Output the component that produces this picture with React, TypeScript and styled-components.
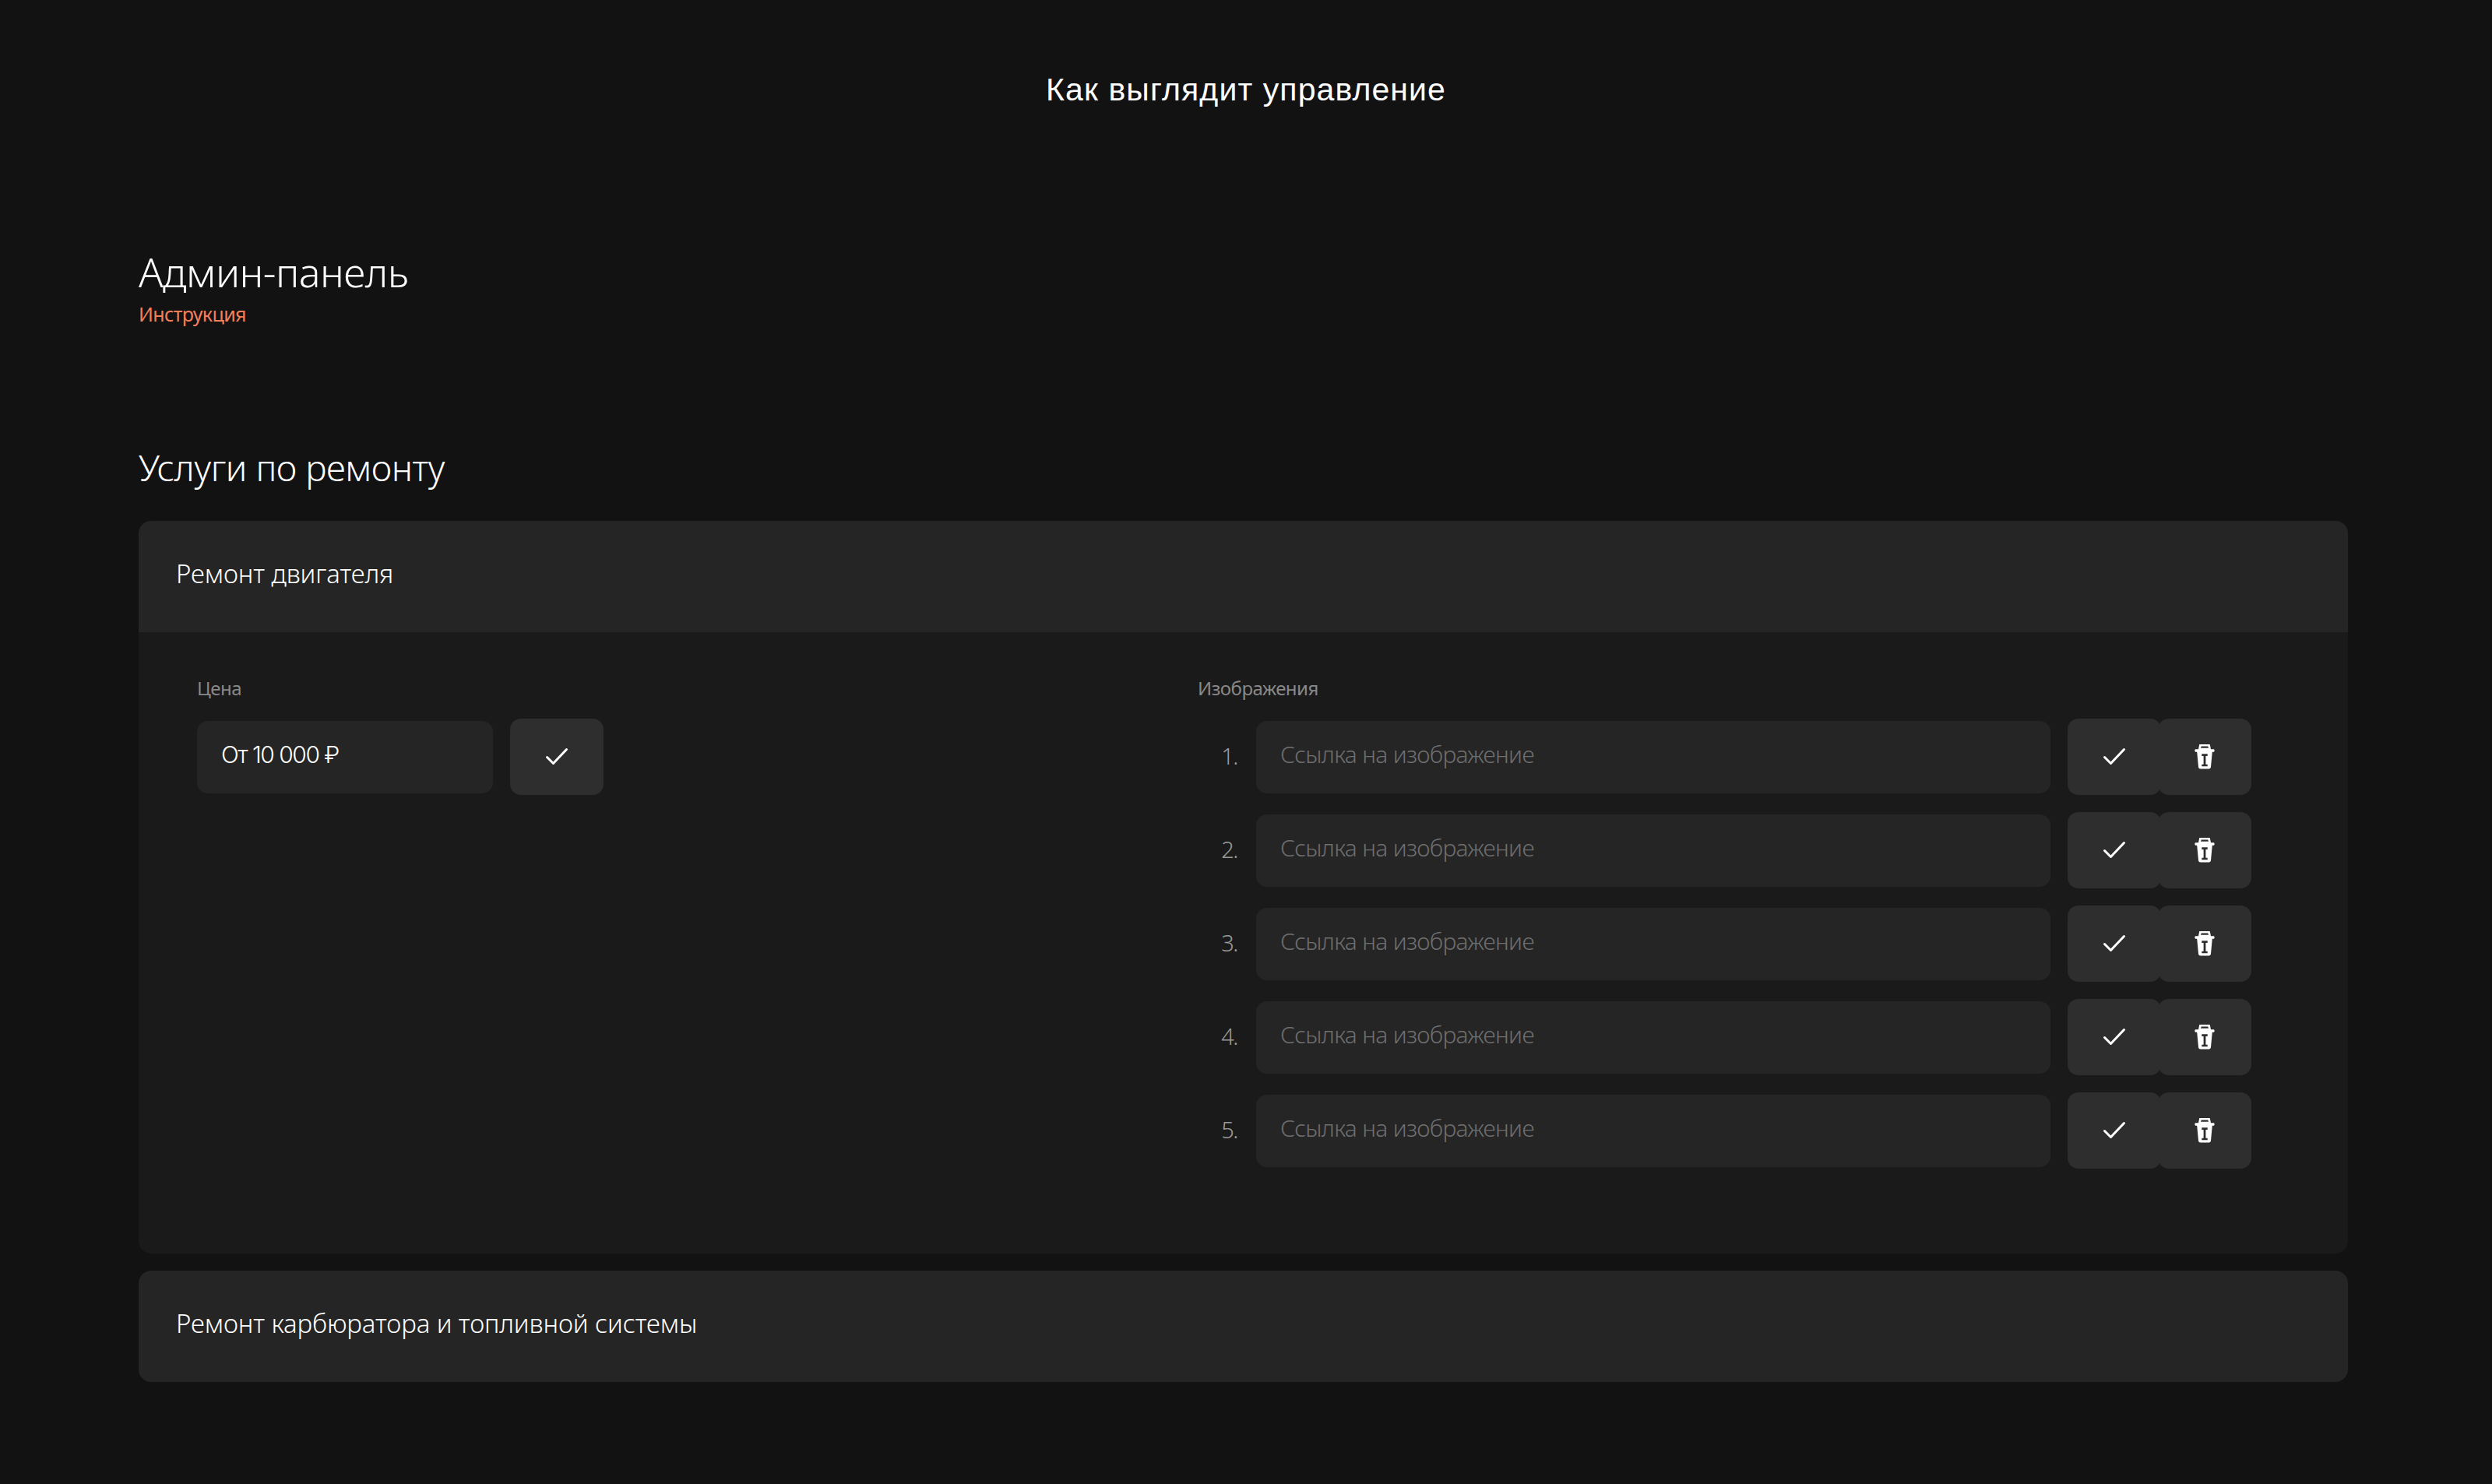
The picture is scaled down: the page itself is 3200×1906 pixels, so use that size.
import styled, { createGlobalStyle } from 'styled-components';

const Global = createGlobalStyle`
  html, body {
    margin: 0;
    padding: 0;
    background: #121212;
  }
  * {
    box-sizing: border-box;
  }
`;

const Page = styled.div`
  width: 3200px;
  height: 1906px;
  padding: 0 185px 0 178px;
  background: #121212;
  color: #fff;
  font-family: 'Noto Sans', 'Open Sans', sans-serif;
  overflow: hidden;
`;

const PageTitle = styled.h2`
  margin: 0;
  padding: 90px 0 0 7px;
  height: 314px;
  font-family: 'Liberation Sans', Arial, sans-serif;
  font-size: 41px;
  font-weight: 400;
  line-height: 50px;
  letter-spacing: 1.1px;
  text-align: center;
`;

const Heading = styled.h1`
  margin: 0;
  font-size: 52px;
  font-weight: 300;
  line-height: 70px;
  letter-spacing: -0.55px;
`;

const Guide = styled.a`
  display: block;
  height: 184px;
  padding-top: 2px;
  color: #f57f58;
  font-size: 25px;
  font-weight: 400;
  line-height: 34px;
  letter-spacing: -0.6px;
`;

const SectionTitle = styled.h2`
  margin: 0 0 37px;
  font-size: 46px;
  font-weight: 300;
  line-height: 64px;
  letter-spacing: -0.5px;
`;

const Accordion = styled.section`
  border-radius: 16px;
  overflow: hidden;
  background: #1a1a1a;

  & + & {
    margin-top: 22px;
  }
`;

const AccordionHead = styled.div`
  display: flex;
  align-items: center;
  height: 143px;
  padding: 0 49px 8px 48px;
  background: #252525;
  font-size: 33px;
  font-weight: 300;
  letter-spacing: -0.1px;
`;

const AccordionBody = styled.div`
  display: grid;
  grid-template-columns: 1285px 1fr;
  height: 798px;
  padding: 55px 123px 0 75px;
`;

const FieldLabel = styled.div`
  height: 56px;
  color: #888;
  font-size: 24px;
  font-weight: 400;
  line-height: 34px;
  letter-spacing: -0.5px;
`;

const Row = styled.div`
  display: flex;
  align-items: center;
  height: 98px;
  margin-bottom: 22px;
`;

const RowNumber = styled.span`
  width: 51px;
  padding-bottom: 3px;
  color: #9a9a9a;
  font-size: 29px;
  font-weight: 300;
  letter-spacing: -1.4px;
  text-align: right;
`;

const Input = styled.input<{ $width: number; $price?: boolean }>`
  width: ${p => p.$width}px;
  height: 93px;
  margin-right: 22px;
  padding: 0 31px 7px;
  border: 0;
  outline: 0;
  border-radius: 14px;
  background: #252525;
  color: #fff;
  font-family: ${p => (p.$price ? "Inter, 'Noto Sans', sans-serif" : "'Noto Sans', sans-serif")};
  font-size: 30px;
  font-weight: 300;
  letter-spacing: ${p => (p.$price ? '-1.5px' : '-0.7px')};

  &::placeholder {
    color: #6e6e6e;
    opacity: 1;
  }
`;

const NumberedInput = styled(Input)`
  margin-left: 24px;
`;

const IconButton = styled.button<{ $joined?: boolean }>`
  display: flex;
  align-items: center;
  justify-content: center;
  width: 120px;
  height: 98px;
  margin-left: ${p => (p.$joined ? '-4px' : '0')};
  padding: 0;
  border: 0;
  border-radius: 14px;
  background: #2e2e2e;
`;

function CheckIcon() {
  return (
    <svg width="30" height="24" viewBox="0 0 30 24" fill="none">
      <path d="M2.5 12.5 L10.5 20.5 L27.5 2.5" stroke="#fff" strokeWidth="3" strokeLinecap="round" strokeLinejoin="round" />
    </svg>
  );
}

function TrashIcon() {
  return (
    <svg width="26" height="32" viewBox="0 0 26 32" fill="none">
      <path
        fill="#fff"
        fillRule="evenodd"
        d="M6 1.2 C6 .5 6.5 0 7.2 0 H18.8 C19.5 0 20 .5 20 1.2 L21 6.3 H24.6 C25.3 6.3 25.6 7 25.6 8 C25.6 9 25.3 9.7 24.6 9.7 H22.8 L21 29 C20.9 30.4 19.8 31.5 18.4 31.5 H7.6 C6.2 31.5 5.1 30.4 5 29 L3.2 9.7 H1.4 C.7 9.7 .4 9 .4 8 C.4 7 .7 6.3 1.4 6.3 H5 Z M8.7 2.4 L8 4.7 H18 L17.3 2.4 Z M9.3 12.3 V15 H11.6 V25.7 H9.3 V28.3 H16.7 V25.7 H14.4 V15 H16.7 V12.3 Z"
      />
    </svg>
  );
}

const images = [1, 2, 3, 4, 5];

export default function App() {
  return (
    <Page>
      <Global />
      <PageTitle>Как выглядит управление</PageTitle>
      <Heading>Админ-панель</Heading>
      <Guide>Инструкция</Guide>
      <SectionTitle>Услуги по ремонту</SectionTitle>
      <Accordion>
        <AccordionHead>Ремонт двигателя</AccordionHead>
        <AccordionBody>
          <div>
            <FieldLabel>Цена</FieldLabel>
            <Row>
              <Input $width={380} $price defaultValue="От 10 000 ₽" />
              <IconButton>
                <CheckIcon />
              </IconButton>
            </Row>
          </div>
          <div>
            <FieldLabel>Изображения</FieldLabel>
            {images.map(n => (
              <Row key={n}>
                <RowNumber>{n}.</RowNumber>
                <NumberedInput $width={1020} placeholder="Ссылка на изображение" />
                <IconButton>
                  <CheckIcon />
                </IconButton>
                <IconButton $joined>
                  <TrashIcon />
                </IconButton>
              </Row>
            ))}
          </div>
        </AccordionBody>
      </Accordion>
      <Accordion>
        <AccordionHead>Ремонт карбюратора и топливной системы</AccordionHead>
      </Accordion>
    </Page>
  );
}
